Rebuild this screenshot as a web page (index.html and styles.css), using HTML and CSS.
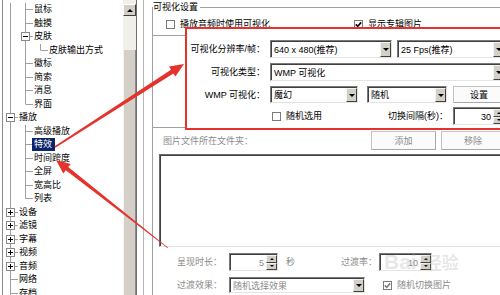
FILE: index.html
```html
<!DOCTYPE html>
<html lang="zh-CN">
<head>
  <meta charset="UTF-8">
  <title>可视化设置</title>
  <link rel="stylesheet" href="styles.css">
</head>
<body>
<div class="dialog">
  <!-- left tree -->
  <div class="tree">
    <div class="tree-list">
      <div class="node"><span class="g v"></span><span class="g t"></span><span class="lbl">鼠标</span></div>
      <div class="node"><span class="g v"></span><span class="g t"></span><span class="lbl">触摸</span></div>
      <div class="node"><span class="g v"></span><span class="g t"><span class="box"></span></span><span class="lbl">皮肤</span></div>
      <div class="node"><span class="g v"></span><span class="g v"></span><span class="g l"></span><span class="lbl">皮肤输出方式</span></div>
      <div class="node"><span class="g v"></span><span class="g t"></span><span class="lbl">徽标</span></div>
      <div class="node"><span class="g v"></span><span class="g t"></span><span class="lbl">简索</span></div>
      <div class="node"><span class="g v"></span><span class="g t"></span><span class="lbl">消息</span></div>
      <div class="node"><span class="g v"></span><span class="g l"></span><span class="lbl">界面</span></div>
      <div class="node"><span class="g t"><span class="box"></span></span><span class="lbl">播放</span></div>
      <div class="node"><span class="g v"></span><span class="g t"></span><span class="lbl">高级播放</span></div>
      <div class="node selected"><span class="g v"></span><span class="g t"></span><span class="lbl">特效</span></div>
      <div class="node"><span class="g v"></span><span class="g t"></span><span class="lbl">时间跨度</span></div>
      <div class="node"><span class="g v"></span><span class="g t"></span><span class="lbl">全屏</span></div>
      <div class="node"><span class="g v"></span><span class="g t"></span><span class="lbl">宽高比</span></div>
      <div class="node"><span class="g v"></span><span class="g l"></span><span class="lbl">列表</span></div>
      <div class="node"><span class="g t"><span class="box plus"></span></span><span class="lbl">设备</span></div>
      <div class="node"><span class="g t"><span class="box plus"></span></span><span class="lbl">滤镜</span></div>
      <div class="node"><span class="g t"><span class="box plus"></span></span><span class="lbl">字幕</span></div>
      <div class="node"><span class="g t"><span class="box plus"></span></span><span class="lbl">视频</span></div>
      <div class="node"><span class="g t"><span class="box plus"></span></span><span class="lbl">音频</span></div>
      <div class="node"><span class="g t"></span><span class="lbl">网络</span></div>
      <div class="node"><span class="g t"></span><span class="lbl">存档</span></div>
    </div>
    <div class="vscroll">
      <div class="sb-btn"></div>
      <div class="sb-track"></div>
      <div class="sb-thumb"></div>
    </div>
  </div>

  <div class="divider"></div>

  <!-- right page -->
  <div class="page">
    <div class="group">
      <div class="group-title">可视化设置</div>

      <div class="check-row">
        <label class="chk"><span class="cb"></span>播放音频时使用可视化</label>
        <label class="chk"><span class="cb"><svg width="7" height="7" viewBox="0 0 7 7"><path d="M0.8 3.4 L2.7 5.3 L6.2 1.4" fill="none" stroke="#000" stroke-width="1.6"/></svg></span>显示专辑图片</label>
      </div>

      <div class="vis-wrap">
        <div class="vis-stub"></div>
        <div class="vis-box">
          <div class="vrow row-a">
            <span class="vlabel">可视化分辨率/帧：</span>
            <div class="vctl">
              <div class="select w122"><span class="val">640 x 480(推荐)</span><span class="dd"></span></div>
              <div class="select w108 ml5"><span class="val">25 Fps(推荐)</span><span class="dd"></span></div>
            </div>
          </div>
          <div class="vrow row-b">
            <span class="vlabel">可视化类型：</span>
            <div class="vctl">
              <div class="select w235"><span class="val">WMP 可视化</span><span class="dd"></span></div>
            </div>
          </div>
          <div class="vrow row-c">
            <span class="vlabel">WMP 可视化：</span>
            <div class="vctl">
              <div class="select w88"><span class="val">魔幻</span><span class="dd"></span></div>
              <div class="select w80 ml9"><span class="val">随机</span><span class="dd"></span></div>
              <div class="btn w52 ml6">设置</div>
            </div>
          </div>
          <div class="vrow row-d">
            <span class="vlabel"></span>
            <div class="vctl">
              <label class="chk ml2"><span class="cb"></span>随机选用</label>
              <span class="push">切换间隔(秒)：</span>
              <div class="spin w52"><span class="val">30</span><span class="spin-btns"><span class="up"></span><span class="down"></span></span></div>
            </div>
          </div>
        </div>
      </div>

      <div class="folder">
        <div class="frow1">
          <span class="dim">图片文件所在文件夹：</span>
          <div class="btn dim">添加</div>
          <div class="btn dim">移除</div>
        </div>
        <div class="listbox"></div>
        <div class="frow2">
          <span class="flabel dim">呈现时长：</span>
          <div class="spin w49"><span class="val dim">5</span><span class="spin-btns"><span class="up"></span><span class="down"></span></span></div>
          <span class="unit dim">秒</span>
          <span class="rate dim">过渡率：</span>
          <div class="spin w53"><span class="val dim">10</span><span class="spin-btns"><span class="up"></span><span class="down"></span></span></div>
        </div>
        <div class="frow3">
          <span class="flabel dim">过渡效果：</span>
          <div class="select w136"><span class="val dim">随机选择效果</span><span class="dd"></span></div>
          <label class="chk dim ml18"><span class="cb"><svg width="7" height="7" viewBox="0 0 7 7"><path d="M0.8 3.4 L2.7 5.3 L6.2 1.4" fill="none" stroke="#808080" stroke-width="1.6"/></svg></span>随机切换图片</label>
        </div>
        <div class="frow4">
          <label class="chk dim"><span class="cb"></span>显示特效名</label>
        </div>
      </div>
    </div>
  </div>
</div>

<div class="watermark">Bai<span class="wm-cn">经验</span></div>

<svg class="arrows" width="500" height="295" viewBox="0 0 500 295">
  <polygon fill="#e5332c" points="54.6,146.3 171,69.7 169,66.6 184,64 175.4,76.6 173.4,73.5 55.4,147.7"/>
  <polygon fill="#e5332c" points="56,160 70.7,163.9 68.2,167.1 168.2,247.7 167.8,248.3 65.8,170.2 63.3,173.4"/>
</svg>
</body>
</html>
```

FILE: styles.css
```css
body {
  margin: 0;
  width: 500px;
  height: 295px;
  overflow: hidden;
  position: relative;
  background: #fff;
  color: #000;
  font-family: "Liberation Sans", "Noto Sans CJK SC", sans-serif;
  font-size: 9px;
  line-height: 12px;
}

.dialog {
  display: flex;
  height: 295px;
}

/* tree */
.tree {
  margin-left: 2px;
  width: 133px;
  border-left: 1px solid #8a8a8a;
  border-right: 1px solid #6f6f6f;
  display: flex;
  overflow: hidden;
  flex: none;
}

.tree-list {
  width: 120px;
  padding-top: 3px;
}

.node {
  display: flex;
  align-items: center;
  height: 13.5px;
  white-space: nowrap;
}

.g {
  width: 15px;
  flex: none;
  align-self: stretch;
  display: flex;
  align-items: center;
  justify-content: center;
}

.g.v {
  background: linear-gradient(#a0a0a0, #a0a0a0) 7px 0 / 1px 100% no-repeat;
}

.g.t {
  background:
    linear-gradient(#a0a0a0, #a0a0a0) 7px 0 / 1px 100% no-repeat,
    linear-gradient(#a0a0a0, #a0a0a0) 8px 50% / 7px 1px no-repeat;
}

.g.l {
  background:
    linear-gradient(#a0a0a0, #a0a0a0) 7px 0 / 1px 50% no-repeat,
    linear-gradient(#a0a0a0, #a0a0a0) 8px 50% / 7px 1px no-repeat;
}

.box {
  width: 9px;
  height: 9px;
  box-sizing: border-box;
  border: 1px solid #8a8a8a;
  background: linear-gradient(#000, #000) center / 5px 1px no-repeat, #fff;
}

.box.plus {
  background:
    linear-gradient(#000, #000) center / 5px 1px no-repeat,
    linear-gradient(#000, #000) center / 1px 5px no-repeat,
    #fff;
}

.lbl {
  padding: 0 1px;
  line-height: 13px;
}

.selected .lbl {
  margin-left: -1px;
  padding: 0 3px 0 2px;
  background: #0a246a;
  color: #fff;
}

.vscroll {
  width: 13px;
  flex: none;
  display: flex;
  flex-direction: column;
  padding-top: 4px;
  background: #f1efe9;
}

.sb-btn {
  height: 12px;
  box-sizing: border-box;
  background: #d4d0c8;
  border: 1px solid;
  border-color: #fff #404040 #404040 #fff;
  display: flex;
  align-items: center;
  justify-content: center;
}

.sb-btn::before {
  content: "";
  border-left: 3px solid transparent;
  border-right: 3px solid transparent;
  border-bottom: 3px solid #000;
}

.sb-track {
  height: 34px;
}

.sb-thumb {
  flex: 1;
  background: #d4d0c8;
  border-left: 1px solid #f4f4f4;
  border-right: 1px solid #8a8a8a;
}

.divider {
  width: 6px;
  flex: none;
}

/* right page */
.page {
  flex: 1;
  border-left: 1px solid #b5b5b5;
  padding-left: 8px;
  overflow: hidden;
}

.group {
  width: 370px;
  margin-top: 7px;
  border-top: 1px solid #a0a0a0;
  border-left: 1px solid #a0a0a0;
}

.group-title {
  width: max-content;
  margin-top: -7px;
  padding-right: 2px;
  background: #fff;
}

.check-row {
  display: grid;
  grid-template-columns: 188px auto;
  align-items: center;
  height: 9px;
  margin-top: 5px;
  padding-left: 13px;
}

.chk {
  display: flex;
  align-items: center;
  gap: 5px;
  white-space: nowrap;
}

.cb {
  width: 9px;
  height: 9px;
  flex: none;
  box-sizing: border-box;
  border: 1px solid #7a7a7a;
  background: #fff;
  display: flex;
  align-items: center;
  justify-content: center;
}

.vis-wrap {
  display: flex;
}

.vis-stub {
  width: 32px;
  flex: none;
  margin: 8px 0 2px;
  border-top: 1px solid #a0a0a0;
  border-bottom: 1px solid #a0a0a0;
}

.vis-box {
  width: 320px;
  flex: none;
  border: 2px solid #e5332c;
  border-right: none;
  padding: 11px 0 3px;
}

.vrow {
  display: flex;
  align-items: center;
  height: 18px;
}

.row-a, .row-b { margin-bottom: 5px; }
.row-c { height: 17px; margin-bottom: 4px; }

.vlabel {
  width: 78px;
  flex: none;
  margin-right: 5px;
  text-align: right;
  white-space: nowrap;
}

.vctl {
  width: 235px;
  flex: none;
  height: 100%;
  display: flex;
  align-items: center;
}

.push {
  margin-left: auto;
  margin-right: 5px;
  white-space: nowrap;
}

/* controls */
.select, .spin {
  display: flex;
  height: 100%;
  box-sizing: border-box;
  border: 1px solid;
  border-color: #7a7a7a #e4e4e4 #e4e4e4 #7a7a7a;
  box-shadow: inset 1px 1px 0 #404040;
  padding: 1px 0 0 1px;
  background: #fff;
  flex: none;
}

.select .val {
  flex: 1;
  padding-left: 2px;
  white-space: nowrap;
  overflow: hidden;
  display: flex;
  align-items: center;
}

.spin .val {
  flex: 1;
  padding-right: 2px;
  display: flex;
  align-items: center;
  justify-content: flex-end;
}

.dd {
  width: 11px;
  flex: none;
  box-sizing: border-box;
  background: #d4d0c8;
  border: 1px solid;
  border-color: #f4f4f4 #404040 #404040 #f4f4f4;
  display: flex;
  align-items: center;
  justify-content: center;
}

.dd::before {
  content: "";
  border-left: 3px solid transparent;
  border-right: 3px solid transparent;
  border-top: 3px solid #000;
}

.spin-btns {
  width: 11px;
  flex: none;
  display: flex;
  flex-direction: column;
}

.spin-btns span {
  flex: 1;
  box-sizing: border-box;
  background: #d4d0c8;
  border: 1px solid;
  border-color: #f4f4f4 #404040 #404040 #f4f4f4;
  display: flex;
  align-items: center;
  justify-content: center;
}

.spin-btns .up::before {
  content: "";
  border-left: 2px solid transparent;
  border-right: 2px solid transparent;
  border-bottom: 2px solid #000;
}

.spin-btns .down::before {
  content: "";
  border-left: 2px solid transparent;
  border-right: 2px solid transparent;
  border-top: 2px solid #000;
}

.btn {
  height: 100%;
  box-sizing: border-box;
  border: 1px solid #c4c4c4;
  border-right-color: #a8a8a8;
  border-bottom-color: #a8a8a8;
  background: #fbfbfb;
  display: flex;
  align-items: center;
  justify-content: center;
  flex: none;
}

.w49 { width: 49px; }
.w52 { width: 52px; }
.w53 { width: 53px; }
.w80 { width: 80px; }
.w88 { width: 88px; }
.w108 { width: 108px; }
.w122 { width: 122px; }
.w136 { width: 136px; }
.w235 { width: 235px; }
.ml2 { margin-left: 2px; }
.ml5 { margin-left: 5px; }
.ml6 { margin-left: 6px; }
.ml9 { margin-left: 9px; }
.ml18 { margin-left: 18px; }

/* lower part */
.dim {
  color: #8a8a8a;
}

.frow1 {
  display: grid;
  grid-template-columns: 203px 65px 64px;
  column-gap: 5px;
  align-items: center;
  height: 19px;
  margin-top: 1px;
  padding-left: 10px;
}

.listbox {
  width: 346px;
  height: 93px;
  margin: 4px 0 0 6px;
  box-sizing: border-box;
  border: 1px solid;
  border-color: #6a6a6a #e4e4e4 #e4e4e4 #6a6a6a;
  box-shadow: inset 1px 1px 0 #404040;
  background: #fff;
}

.frow2, .frow3, .frow4 {
  display: flex;
  align-items: center;
  padding-left: 24px;
}

.frow2 {
  height: 18px;
  margin-top: 6px;
}

.frow3 {
  height: 16px;
  margin-top: 6px;
}

.frow4 {
  height: 12px;
  margin-top: 1px;
  padding-left: 230px;
}

.flabel {
  width: 52px;
  flex: none;
  white-space: nowrap;
}

.unit {
  width: 55px;
  margin-left: 8px;
  flex: none;
}

.rate {
  width: 38px;
  flex: none;
  white-space: nowrap;
}

/* overlays */
.watermark {
  position: absolute;
  left: 384px;
  top: 250px;
  font: bold 21px/24px "Liberation Sans", "Noto Sans CJK SC", sans-serif;
  color: rgba(170, 170, 170, 0.28);
  white-space: nowrap;
}

.wm-cn {
  margin-left: 8px;
  font-size: 17px;
}

.arrows {
  position: absolute;
  left: 0;
  top: 0;
  pointer-events: none;
}
```
